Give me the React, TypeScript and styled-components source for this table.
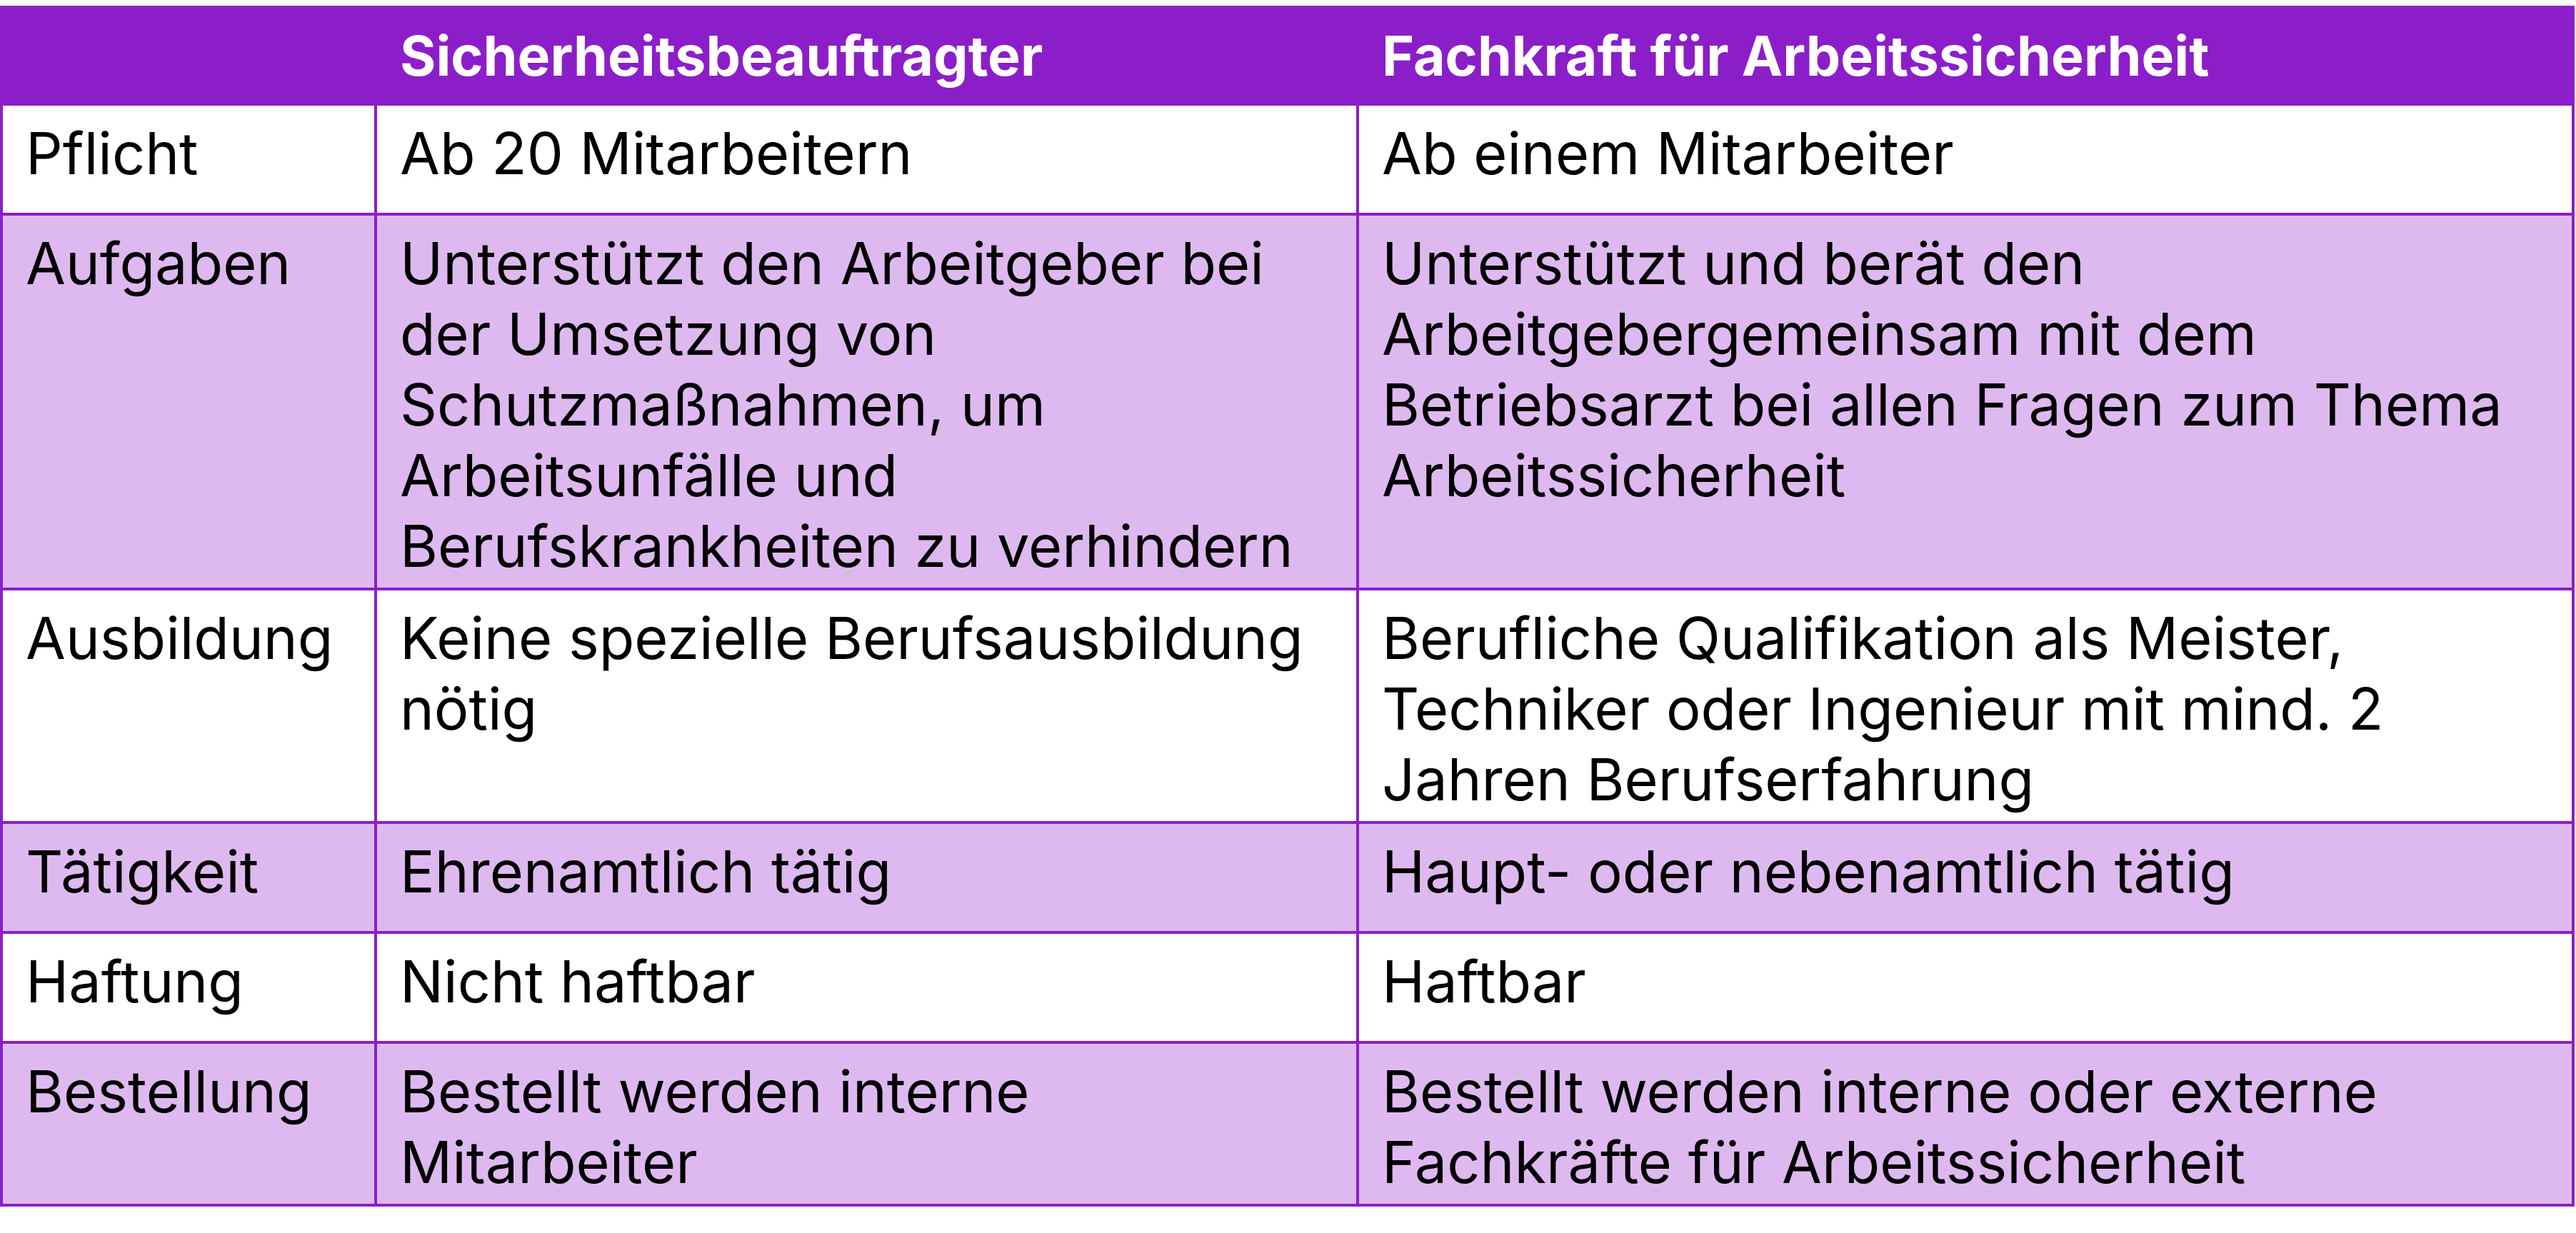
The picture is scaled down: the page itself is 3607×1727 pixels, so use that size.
import React from "react"
import styled, { createGlobalStyle } from "styled-components"

const GlobalStyle = createGlobalStyle`
    html,
    body {
        margin: 0;
        padding: 0;
        background: #ffffff;
    }

    body {
        font-family: Inter, "Liberation Sans", sans-serif;
        color: #000000;
    }
`

const Page = styled.div`
    padding-top: 8px;
    width: 3605px;
`

const Table = styled.div`
    display: grid;
    grid-template-columns: 520px 1371px 1698px;
    gap: 4px;
    border: 4px solid #8c1ec9;
    background: #8c1ec9;
`

const HeadCell = styled.div`
    height: 132px;
    display: flex;
    align-items: center;
    padding: 0 32px;
    box-sizing: border-box;
    background: #8c1ec9;
    color: #ffffff;
    font-size: 77px;
    font-weight: 700;
    white-space: nowrap;
`

const Cell = styled.div<{ $shaded: boolean }>`
    min-height: 150px;
    padding: 18px 32px 8px 32px;
    box-sizing: border-box;
    background: ${({ $shaded }) => ($shaded ? "#deb9f0" : "#ffffff")};
    font-size: 81px;
    line-height: 99px;
    font-weight: 400;
`

const Line = styled.span`
    display: block;
    white-space: nowrap;
`

type Row = {
    label: string
    beauftragter: string[]
    fachkraft: string[]
}

const rows: Row[] = [
    {
        label: "Pflicht",
        beauftragter: ["Ab 20 Mitarbeitern"],
        fachkraft: ["Ab einem Mitarbeiter"],
    },
    {
        label: "Aufgaben",
        beauftragter: [
            "Unterstützt den Arbeitgeber bei",
            "der Umsetzung von",
            "Schutzmaßnahmen, um",
            "Arbeitsunfälle und",
            "Berufskrankheiten zu verhindern",
        ],
        fachkraft: [
            "Unterstützt und berät den",
            "Arbeitgebergemeinsam mit dem",
            "Betriebsarzt bei allen Fragen zum Thema",
            "Arbeitssicherheit",
        ],
    },
    {
        label: "Ausbildung",
        beauftragter: ["Keine spezielle Berufsausbildung", "nötig"],
        fachkraft: [
            "Berufliche Qualifikation als Meister,",
            "Techniker oder Ingenieur mit mind. 2",
            "Jahren Berufserfahrung",
        ],
    },
    {
        label: "Tätigkeit",
        beauftragter: ["Ehrenamtlich tätig"],
        fachkraft: ["Haupt- oder nebenamtlich tätig"],
    },
    {
        label: "Haftung",
        beauftragter: ["Nicht haftbar"],
        fachkraft: ["Haftbar"],
    },
    {
        label: "Bestellung",
        beauftragter: ["Bestellt werden interne", "Mitarbeiter"],
        fachkraft: ["Bestellt werden interne oder externe", "Fachkräfte für Arbeitssicherheit"],
    },
]

const Lines: React.FC<{ lines: string[] }> = ({ lines }) => (
    <>
        {lines.map((line) => (
            <Line key={line}>{line}</Line>
        ))}
    </>
)

const App: React.FC = () => {
    return (
        <Page>
            <GlobalStyle />
            <Table>
                <HeadCell />
                <HeadCell>Sicherheitsbeauftragter</HeadCell>
                <HeadCell>Fachkraft für Arbeitssicherheit</HeadCell>

                {rows.map((row, index) => (
                    <React.Fragment key={row.label}>
                        <Cell $shaded={index % 2 === 1}>{row.label}</Cell>
                        <Cell $shaded={index % 2 === 1}>
                            <Lines lines={row.beauftragter} />
                        </Cell>
                        <Cell $shaded={index % 2 === 1}>
                            <Lines lines={row.fachkraft} />
                        </Cell>
                    </React.Fragment>
                ))}
            </Table>
        </Page>
    )
}

export default App
